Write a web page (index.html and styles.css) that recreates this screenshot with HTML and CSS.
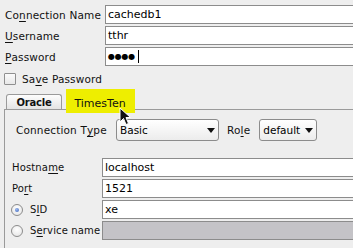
FILE: index.html
```html
<!DOCTYPE html>
<html>
<head>
<meta charset="utf-8">
<link rel="stylesheet" href="styles.css">
</head>
<body>
<div class="dialog">
  <div class="fields top">
    <label class="lbl">Co<u>n</u>nection Name</label>
    <div class="input">cachedb1</div>
    <label class="lbl"><u>U</u>sername</label>
    <div class="input">tthr</div>
    <label class="lbl"><u>P</u>assword</label>
    <div class="input"><span class="dots">●●●●</span><span class="caret"></span></div>
  </div>
  <div class="save">
    <span class="checkbox"></span>
    <span class="lbl">Sa<u>v</u>e Password</span>
  </div>
  <div class="tabs">
    <div class="tab-strip">
      <div class="tab active">Oracle</div>
      <div class="tab hl"><span class="hl-mark"></span><span class="tab-text">TimesTen</span></div>
    </div>
    <div class="panel">
      <div class="type-row">
        <span class="lbl type-lbl">Connection T<u>y</u>pe</span>
        <div class="select sel-type"><span>Basic</span><span class="arrow"></span></div>
        <span class="lbl role-lbl">Ro<u>l</u>e</span>
        <div class="select sel-role"><span>default</span><span class="arrow"></span></div>
      </div>
      <div class="fields conn">
        <label class="lbl">Hostna<u>m</u>e</label>
        <div class="input">localhost</div>
        <label class="lbl">Po<u>r</u>t</label>
        <div class="input">1521</div>
        <label class="lbl radio-lbl"><span class="radio on"></span>S<u>I</u>D</label>
        <div class="input">xe</div>
        <label class="lbl radio-lbl"><span class="radio"></span>S<u>e</u>rvice name</label>
        <div class="input disabled"></div>
      </div>
    </div>
  </div>
  <svg class="cursor" width="14" height="20" viewBox="0 0 14 20">
    <path d="M1 1 L1 15 L4.5 11.5 L7 17.5 L9.5 16.5 L7 10.5 L11.5 10.5 Z" fill="#111" stroke="#fff" stroke-width="1"/>
  </svg>
</div>
</body>
</html>
```

FILE: styles.css
```css
html, body {
  margin: 0;
  padding: 0;
  background: #eeeeee;
  overflow: hidden;
}
body {
  width: 353px;
  height: 248px;
  font-family: "DejaVu Sans", sans-serif;
  font-size: 10px;
  letter-spacing: 0.15px;
  color: #111;
}
u {
  text-decoration: underline;
  text-underline-offset: 2px;
}
.dialog {
  position: relative;
  padding-top: 5px;
  height: 243px;
}
.fields {
  display: grid;
  row-gap: 2px;
  grid-auto-rows: 19px;
}
.top {
  grid-template-columns: 100px 1fr;
  padding-left: 5px;
}
.lbl {
  display: flex;
  align-items: center;
  white-space: nowrap;
  font-size: 10.5px;
}
.conn .lbl {
  font-size: 10px;
}
.input {
  box-sizing: border-box;
  height: 19px;
  border: 1px solid #8c8c8c;
  border-right: none;
  background: #fff;
  margin-right: -4px;
  padding-left: 2px;
  display: flex;
  align-items: center;
  color: #000;
  font-size: 11px;
  letter-spacing: 0;
}
.input.disabled {
  background: #c4c3c7;
}
.dots {
  font-size: 8px;
  letter-spacing: -0.2px;
}
.caret {
  display: inline-block;
  width: 1px;
  height: 13px;
  background: #000;
  margin-left: 3px;
}
.save {
  display: flex;
  align-items: center;
  gap: 6px;
  margin-top: 7px;
  padding-left: 4px;
  height: 12px;
}
.checkbox {
  box-sizing: border-box;
  width: 12px;
  height: 12px;
  border: 1px solid #8f8f8f;
  background: linear-gradient(#fafafa, #e8e8e8);
  border-radius: 1px;
}
.tabs {
  margin-top: 9px;
  margin-left: 4px;
}
.tab-strip {
  display: flex;
  height: 15px;
  padding-left: 2px;
}
.tab {
  box-sizing: border-box;
  height: 15px;
  display: flex;
  align-items: center;
  justify-content: center;
}
.tab.active {
  width: 56px;
  border: 1px solid #9a9a9a;
  border-bottom: none;
  border-radius: 3px 3px 0 0;
  background: linear-gradient(#fdfdfd, #e4e4e4);
  font-weight: bold;
  font-size: 10px;
  letter-spacing: -0.2px;
  padding-top: 1px;
}
.tab.hl {
  position: relative;
  width: 72px;
  padding-left: 4px;
  padding-top: 3px;
  font-size: 11px;
  letter-spacing: 0;
}
.hl-mark {
  position: absolute;
  left: 4px;
  top: -5px;
  width: 69px;
  height: 24px;
  background: #eeee00;
  z-index: 1;
}
.tab-text {
  position: relative;
  z-index: 2;
}
.panel {
  border-top: 1px solid #9a9a9a;
  border-left: 1px solid #9a9a9a;
  height: 140px;
  padding-top: 9px;
}
.type-row {
  display: flex;
  align-items: center;
  height: 22px;
  padding-left: 11px;
}
.type-lbl {
  width: 100px;
}
.select {
  box-sizing: border-box;
  height: 22px;
  border: 1px solid #8c8c8c;
  border-radius: 3px;
  background: linear-gradient(#ffffff, #ececec);
  display: flex;
  align-items: center;
  justify-content: space-between;
  padding: 0 3px 0 3px;
  color: #000;
  font-size: 10.5px;
  letter-spacing: 0;
}
.sel-type {
  width: 103px;
}
.role-lbl {
  margin-left: 8px;
}
.sel-role {
  width: 58px;
  margin-left: 9px;
}
.arrow {
  width: 0;
  height: 0;
  border-left: 4px solid transparent;
  border-right: 4px solid transparent;
  border-top: 5px solid #111;
}
.conn {
  grid-template-columns: 90px 1fr;
  margin-top: 17px;
  padding-left: 7px;
}
.radio-lbl {
  margin-left: -1px;
}
.radio {
  box-sizing: border-box;
  width: 12px;
  height: 12px;
  border-radius: 50%;
  border: 1px solid #8c8c8c;
  background: radial-gradient(circle at 50% 35%, #ffffff, #e2e2e2);
  margin-right: 7px;
  position: relative;
}
.radio.on::after {
  content: "";
  position: absolute;
  left: 3px;
  top: 3px;
  width: 4px;
  height: 4px;
  border-radius: 50%;
  background: radial-gradient(circle at 40% 35%, #9ab8f0, #3a62b8);
}
.cursor {
  position: absolute;
  left: 119px;
  top: 107px;
  z-index: 5;
}
```
